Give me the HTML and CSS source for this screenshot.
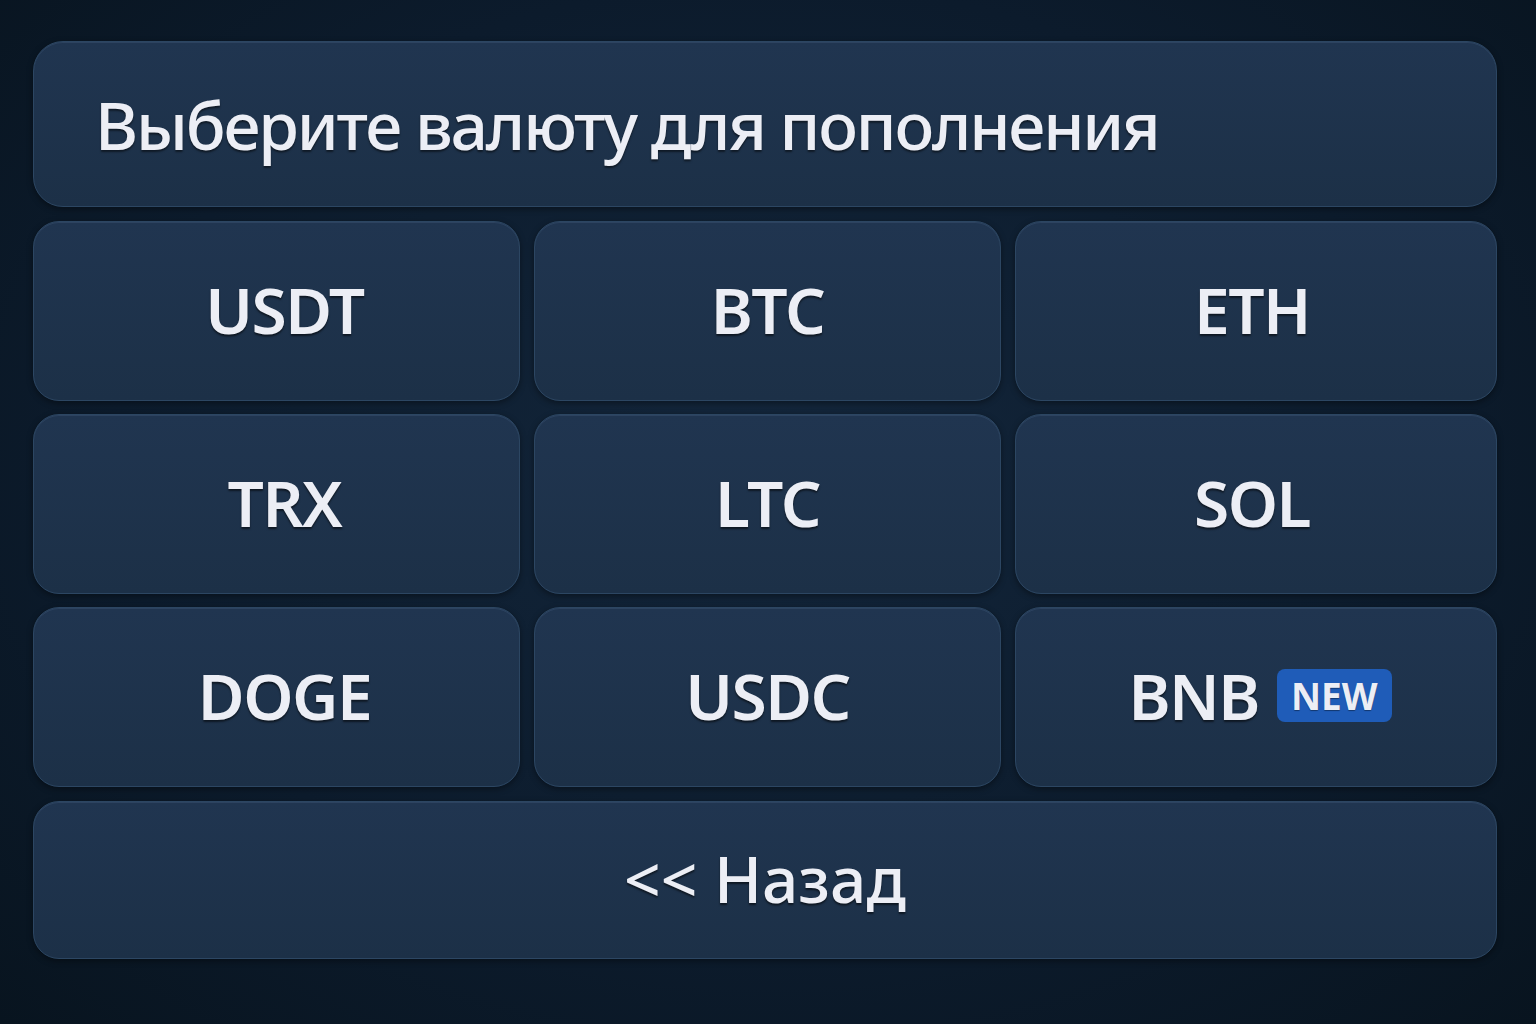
FILE: index.html
```html
<!DOCTYPE html>
<html>
<head>
    <title>Пополнение</title>
    <link rel="stylesheet" href="styles.css">
</head>
<body>
    <div class="menu">
        <div class="menu-title">Выберите валюту для пополнения</div>
        <div class="currency-grid">
            <button class="key">USDT</button>
            <button class="key">BTC</button>
            <button class="key">ETH</button>
            <button class="key">TRX</button>
            <button class="key">LTC</button>
            <button class="key">SOL</button>
            <button class="key">DOGE</button>
            <button class="key">USDC</button>
            <button class="key key-new">BNB <span class="badge">NEW</span></button>
        </div>
        <button class="key back">&lt;&lt; Назад</button>
    </div>
</body>
</html>
```

FILE: styles.css
```css
html, body {
    margin: 0;
    height: 100%;
}
body {
    background: radial-gradient(ellipse at 50% 45%, #13263b 0%, #0c1b2c 60%, #08141f 100%);
    font-family: "Noto Sans", "Open Sans", sans-serif;
    color: #eceef5;
}
.menu {
    padding: 41px 39px 0 33px;
    display: flex;
    flex-direction: column;
    gap: 14px;
}
.menu-title {
    height: 166px;
    box-sizing: border-box;
    padding-left: 61px;
    display: flex;
    align-items: center;
    font-size: 66px;
    font-weight: 500;
    letter-spacing: -2.2px;
    background: linear-gradient(180deg, #203550 0%, #1c3047 100%);
    border: 1px solid #2c4662;
    border-radius: 30px;
    box-shadow: inset 0 1px 0 rgba(120, 150, 190, 0.15), 0 2px 6px rgba(0, 0, 0, 0.4);
    text-shadow: 0 2px 2px rgba(0, 0, 0, 0.5);
}
.currency-grid {
    display: grid;
    grid-template-columns: 487fr 467fr 482fr;
    grid-auto-rows: 180px;
    gap: 13px 14px;
}
.key {
    font-family: inherit;
    color: inherit;
    font-size: 64px;
    font-weight: 600;
    letter-spacing: -1.5px;
    background: linear-gradient(180deg, #203550 0%, #1c3047 100%);
    border: 1px solid #2c4662;
    border-radius: 26px;
    box-shadow: inset 0 1px 0 rgba(120, 150, 190, 0.15), 0 2px 6px rgba(0, 0, 0, 0.4);
    text-shadow: 0 2px 2px rgba(0, 0, 0, 0.55);
    display: flex;
    align-items: center;
    justify-content: center;
    gap: 18px;
    padding: 0 0 4px;
    cursor: pointer;
}
.currency-grid .key:nth-child(3n+1) {
    padding-left: 16px;
}
.currency-grid .key:nth-child(3n) {
    padding-right: 8px;
}
.currency-grid .key-new {
    padding-right: 0;
    padding-left: 16px;
}
.back {
    height: 158px;
    font-weight: 500;
    letter-spacing: 0;
}
.badge {
    background: #1f5cb8;
    border-radius: 8px;
    font-size: 37px;
    font-weight: 700;
    letter-spacing: 0;
    padding: 0 14px;
    height: 53px;
    display: inline-flex;
    align-items: center;
    text-shadow: 0 1px 1px rgba(0, 0, 0, 0.4);
}
```
